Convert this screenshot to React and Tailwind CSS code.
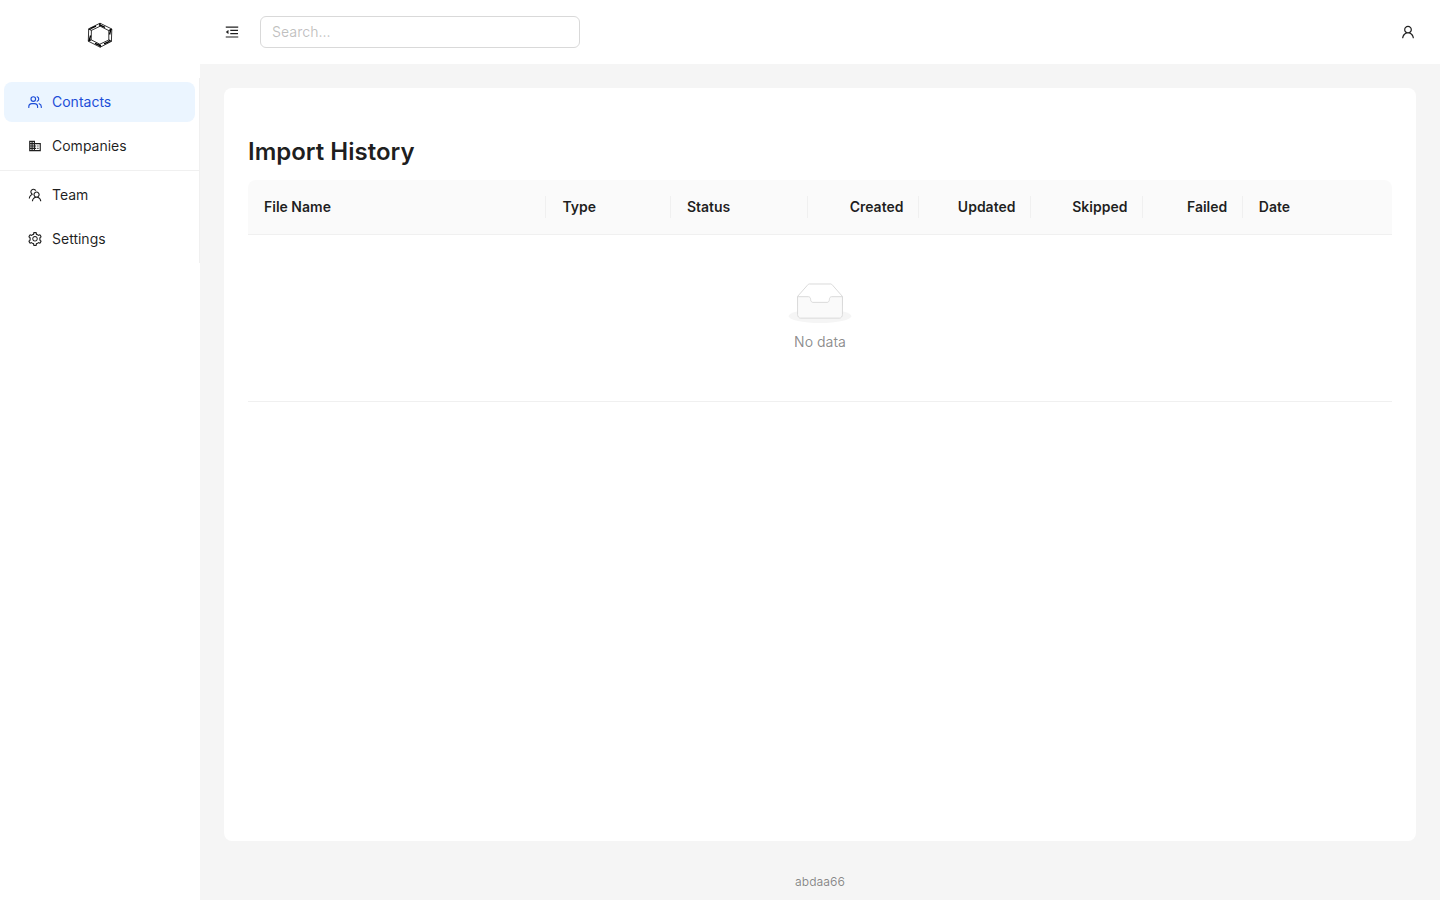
import React from 'react';
import { AiOutlineMenuFold, AiOutlineSetting, AiOutlineTeam, AiOutlineUser } from 'react-icons/ai';
import { MdBusiness } from 'react-icons/md';

const columns = [
    { title: 'File Name', width: 298.4 },
    { title: 'Type', width: 124.5 },
    { title: 'Status', width: 137.1 },
    { title: 'Created', width: 111, right: true },
    { title: 'Updated', width: 112, right: true },
    { title: 'Skipped', width: 112, right: true },
    { title: 'Failed', width: 99.8, right: true },
    { title: 'Date' }
];

// Hexagon made of six double-edged beams
const Logo = () => (
    <svg width="28" height="28" viewBox="0 0 28 28" fill="none" stroke="#000" strokeLinejoin="round">
        <path d="M14 2.2 25.8 8 25.4 20.4 14.2 26.2 2.3 20.2 2.7 7.8Z" strokeWidth="0.8" />
        <path d="M14.2 5.2 22.8 9.6 22.8 19 13.8 23.2 5.2 18.8 5.4 9.4Z" strokeWidth="0.8" />
        <path d="M13 3.6 19 6.4M24.8 8.4 23.6 13.5M23.6 20.4 18 22.9M15 25 9 22.4M3.2 19.8 4.6 14.5M4.4 7.6 10 5.2" strokeWidth="1.4" />
        <path d="M14 2.2V5.2M25.8 8 22.8 9.6M25.4 20.4 22.8 19M14.2 26.2 13.8 23.2M2.3 20.2 5.2 18.8M2.7 7.8 5.4 9.4" strokeWidth="1.1" />
    </svg>
);

const ContactsIcon = () => (
    <svg width="14" height="14" viewBox="0 0 14 14" fill="none" stroke="currentColor" strokeWidth="1.15" strokeLinecap="round">
        <circle cx="5.3" cy="4" r="2.3" />
        <path d="M9.2 1.8A2.35 2.35 0 0 1 9.2 6.2" />
        <path d="M.8 12.5V11.8C.8 9.8 2.3 8.6 4 8.6H6.4C8.2 8.6 9.6 9.8 9.6 11.8V12.5" />
        <path d="M11.2 8.7C12.5 9.1 13.3 10.2 13.3 11.8V12.5" />
    </svg>
);

const MenuItem = ({ icon, label, active }) => (
    <li
        className={`mx-1 flex h-10 items-center rounded-lg pl-[23px] ${
            active ? 'bg-[#ebf5ff] text-[#1d4ed8]' : 'text-black/88'
        }`}
    >
        <span className="flex w-4 justify-center">{icon}</span>
        <span className="ml-[9px]">{label}</span>
    </li>
);

const Sidebar = () => (
    <aside className="w-[200px] shrink-0 bg-white">
        <div className="flex h-[78px] justify-center pt-[21px]">
            <Logo />
        </div>
        <ul className="flex flex-col gap-1 border-r border-[#f0f0f0] py-1">
            <MenuItem icon={<ContactsIcon />} label="Contacts" active />
            <MenuItem icon={<MdBusiness size={14} />} label="Companies" />
            <li className="h-px bg-[#f0f0f0]" />
            <MenuItem icon={<AiOutlineTeam size={16} />} label="Team" />
            <MenuItem icon={<AiOutlineSetting size={16} />} label="Settings" />
        </ul>
    </aside>
);

const Header = () => (
    <header className="flex h-16 items-center bg-white px-6">
        <AiOutlineMenuFold size={16} />
        <input
            className="ml-5 h-8 w-80 rounded-md border border-[#d9d9d9] px-[11px] pb-0.5 outline-none placeholder:text-black/25"
            placeholder="Search..."
        />
        <AiOutlineUser size={16} className="ml-auto" />
    </header>
);

const EmptyState = () => (
    <div className="flex flex-col items-center gap-2 border-b border-[#f0f0f0] py-12">
        <svg width="64" height="40" viewBox="0 0 64 41">
            <g transform="translate(0 1)" fill="none" fillRule="evenodd">
                <ellipse fill="#f5f5f5" cx="32" cy="33" rx="32" ry="7" />
                <g fillRule="nonzero" stroke="#d9d9d9">
                    <path d="M55 12.76L44.854 1.258C44.367.474 43.656 0 42.907 0H21.093c-.749 0-1.46.474-1.947 1.257L9 12.761V22h46v-9.24z" />
                    <path
                        d="M41.613 15.931c0-1.605.994-2.93 2.227-2.931H55v18.137C55 33.26 53.68 35 52.05 35h-40.1C10.32 35 9 33.259 9 31.137V13h11.16c1.233 0 2.227 1.323 2.227 2.928v.022c0 1.605 1.005 2.901 2.237 2.901h14.752c1.232 0 2.237-1.308 2.237-2.913v-.007z"
                        fill="#fafafa"
                    />
                </g>
            </g>
        </svg>
        <p className="text-black/45">No data</p>
    </div>
);

const HistoryTable = () => (
    <div>
        <div className="flex h-[55px] items-center rounded-t-lg border-b border-[#f0f0f0] bg-[#fafafa] font-semibold">
            {columns.map((column, index) => (
                <div
                    key={column.title}
                    className={`flex h-[22px] items-center border-[#f0f0f0] pl-4 ${
                        column.right ? 'justify-end pr-[14.5px]' : 'pr-4'
                    } ${index < columns.length - 1 ? 'shrink-0 border-r' : 'flex-1'}`}
                    style={{ width: column.width }}
                >
                    {column.title}
                </div>
            ))}
        </div>
        <EmptyState />
    </div>
);

export default function App() {
    return (
        <div className="flex h-screen bg-[#f5f5f5] font-['Inter',sans-serif] text-sm leading-[22px] text-black/88">
            <Sidebar />
            <div className="flex min-w-0 flex-1 flex-col">
                <Header />
                <main className="mx-6 mt-6 h-[753px] rounded-lg bg-white px-6 pt-12">
                    <h3 className="mb-3 text-2xl leading-8 font-semibold">Import History</h3>
                    <HistoryTable />
                </main>
                <footer className="pt-[30px] text-center text-xs leading-[22px] text-black/45">abdaa66</footer>
            </div>
        </div>
    );
}
